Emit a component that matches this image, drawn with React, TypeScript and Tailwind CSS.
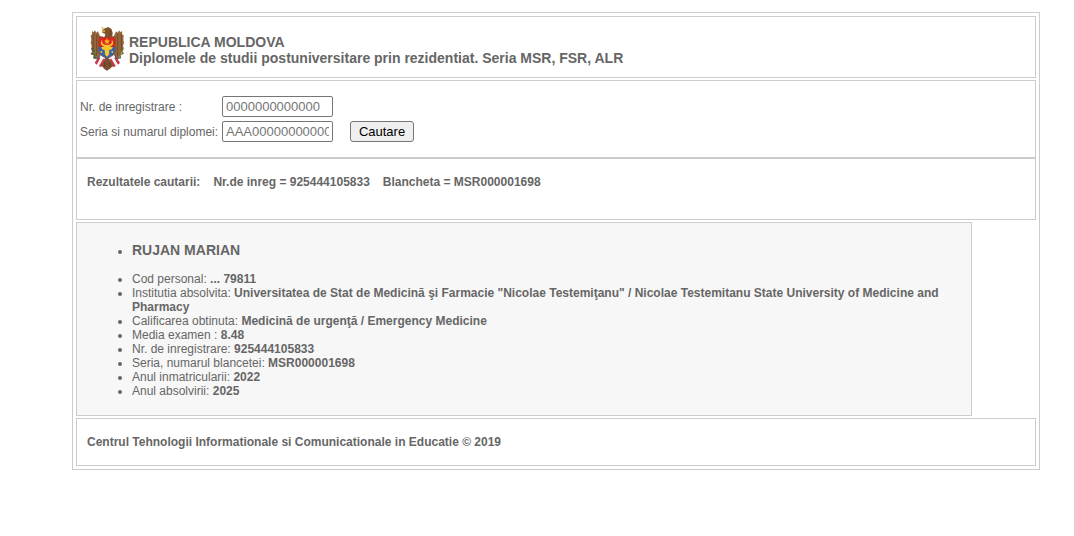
import React from "react";

function Emblem() {
  return (
    <svg viewBox="0 0 105 138" className="h-[46px] w-[35px] shrink-0" role="img" aria-label="Stema Republicii Moldova">
      {/* cross */}
      <path d="M38 2v12M33 6h10" stroke="#d6b44a" strokeWidth="2" />
      {/* wings */}
      <path
        d="M30 30 24 16 19 20 15 13 11 19 6 15 6 26 2 28 4 42 2 50 5 60 4 72 10 80 12 92 20 98 26 106 40 100 40 32Z"
        fill="#94663d"
      />
      <path
        d="M72 30 78 16 83 20 87 13 91 19 96 15 97 26 101 28 100 42 102 50 99 60 100 72 94 80 92 92 84 98 78 106 62 100 62 32Z"
        fill="#94663d"
      />
      <path
        d="M10 24v48M20 24v66M94 24v48M83 24v66"
        stroke="#65401f"
        strokeWidth="2"
        fill="none"
      />
      {/* head and neck */}
      <path d="M42 8 54 3 64 8 68 20 66 38H42L46 24 36 20 37 14Z" fill="#80532f" />
      <path d="M36 15 45 12 45 18 36 20Z" fill="#d8a33c" />
      <path d="M58 12 62 18 60 32" stroke="#5b381d" strokeWidth="2" fill="none" />
      {/* tail */}
      <path d="M48 90 40 104 30 120 38 122 42 128 51 134 60 128 66 122 74 120 64 104Z" fill="#7b5030" />
      <path d="M44 108v14M59 108v14" stroke="#553519" strokeWidth="2" />
      {/* ribbons */}
      <path d="M16 108 32 86 46 94 30 122 24 116Z" fill="#f4f2f2" />
      <path d="M88 108 72 86 56 94 74 122 80 116Z" fill="#f4f2f2" />
      <path d="M14 110 26 92 31 96 20 116ZM90 110 78 92 73 96 84 116Z" fill="#c93646" />
      <path d="M27 120 40 98 45 100 33 124ZM77 120 64 98 59 100 71 124Z" fill="#c93646" />
      <path d="M22 100 30 88M82 100 74 88" stroke="#3a4f86" strokeWidth="3" />
      {/* branches */}
      <path d="M5 66 11 74 6 82 14 86 12 95 20 97" stroke="#41683a" strokeWidth="5" fill="none" />
      <path d="M100 64 94 74 99 82 90 86 91 95 84 97" stroke="#566f3d" strokeWidth="4" fill="none" />
      <circle cx="6" cy="84" r="3" fill="#c33a2d" />
      <path d="M102 66 88 94" stroke="#c7a13d" strokeWidth="2" />
      {/* shield */}
      <path d="M25 34H76V76Q76 86 51 98 25 86 25 76Z" fill="#dc2420" />
      <path d="M25 62H76V76Q76 86 51 98 25 86 25 76Z" fill="#3562ad" />
      <path d="M25 34H76V76Q76 86 51 98 25 86 25 76Z" fill="none" stroke="#8c5325" strokeWidth="2" />
      {/* aurochs head */}
      <path
        d="M37 40Q26 56 42 62L33 64 38 71 44 71 45 86 51 92 57 86 58 71 64 71 69 64 60 62Q76 56 65 40 68 55 58 56H44Q34 55 37 40Z"
        fill="#f5c62b"
      />
      <path d="m51 37 3 6 6 1-5 4 2 6-6-3-6 3 2-6-5-4 6-1Z" fill="#f2b827" />
      <circle cx="34" cy="78" r="3" fill="#e9c238" />
      <circle cx="67" cy="78" r="3" fill="#e9c238" />
    </svg>
  );
}

const details = [
  { label: "Cod personal:", value: "... 79811" },
  {
    label: "Institutia absolvita:",
    value:
      'Universitatea de Stat de Medicină şi Farmacie "Nicolae Testemiţanu" / Nicolae Testemitanu State University of Medicine and Pharmacy',
  },
  { label: "Calificarea obtinuta:", value: "Medicină de urgenţă / Emergency Medicine" },
  { label: "Media examen :", value: "8.48" },
  { label: "Nr. de inregistrare:", value: "925444105833" },
  { label: "Seria, numarul blancetei:", value: "MSR000001698" },
  { label: "Anul inmatricularii:", value: "2022" },
  { label: "Anul absolvirii:", value: "2025" },
];

const inputClass =
  "h-[21px] w-[111px] rounded-[2px] border border-[#767676] bg-white px-[3px] text-[13px] text-black placeholder:text-[#757575]";

export default function App() {
  return (
    <div className="mt-3 mr-[34px] mb-3 ml-[72px] border border-[#ccc] bg-white p-[3px] font-['Liberation_Sans',Arial,sans-serif] text-xs leading-[14px] text-[#666]">
      <header className="mb-[2px] flex items-end border border-[#ccc] pt-[9px] pr-3 pb-[5px] pl-[13px]">
        <Emblem />
        <h1 className="mb-1.5 ml-1 text-sm leading-4 font-bold">
          REPUBLICA MOLDOVA
          <br />
          Diplomele de studii postuniversitare prin rezidentiat. Seria MSR, FSR, ALR
        </h1>
      </header>

      <form
        className="grid grid-cols-[138px_111px_auto] items-center justify-start gap-x-1 gap-y-1 border border-[#ccc] px-[3px] py-[15px]"
        onSubmit={(e) => e.preventDefault()}
      >
        <label htmlFor="nr" className="whitespace-nowrap">
          Nr. de inregistrare :
        </label>
        <input id="nr" type="text" placeholder="0000000000000" className={inputClass} />
        <span />
        <label htmlFor="seria" className="whitespace-nowrap">
          Seria si numarul diplomei:
        </label>
        <input id="seria" type="text" placeholder="AAA000000000000" className={inputClass} />
        <button
          type="submit"
          className="ml-[13px] h-[21px] w-16 rounded-[3px] border border-[#767676] bg-[#efefef] text-[13px] text-black"
        >
          Cautare
        </button>
      </form>

      <section className="mb-[2px] flex flex-wrap gap-x-[13px] border border-[#ccc] px-[10px] pt-4 pb-[30px] font-bold">
        <span>Rezultatele cautarii:</span>
        <span>Nr.de inreg = 925444105833</span>
        <span>Blancheta = MSR000001698</span>
      </section>

      <section className="mr-16 mb-[2px] border border-[#ccc] bg-[#f7f7f7] pt-[19px] pr-[15px] pb-[17px] pl-[55px]">
        <ul className="list-disc">
          <li className="mb-[14px]">
            <h2 className="text-sm leading-4 font-bold">RUJAN MARIAN</h2>
          </li>
          {details.map((d) => (
            <li key={d.label}>
              {d.label} <b>{d.value}</b>
            </li>
          ))}
        </ul>
      </section>

      <footer className="border border-[#ccc] px-[10px] py-4 font-bold">
        Centrul Tehnologii Informationale si Comunicationale in Educatie © 2019
      </footer>
    </div>
  );
}
